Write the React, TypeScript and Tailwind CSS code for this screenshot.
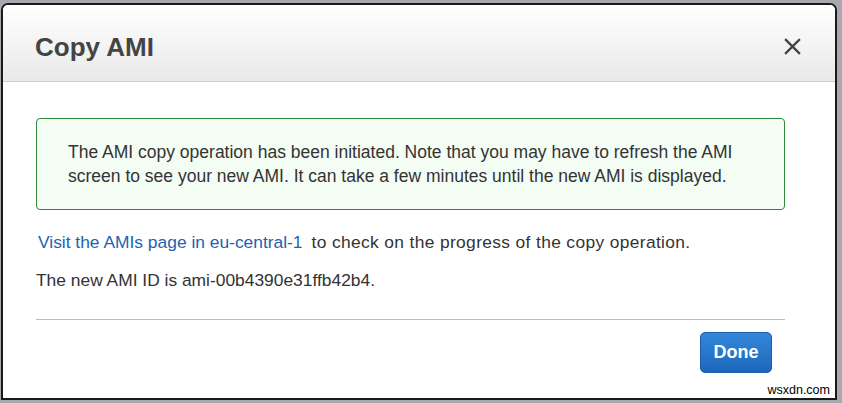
import React from 'react';

const CloseIcon = () => (
  <svg width="17" height="17" viewBox="0 0 18 18" className="text-[#444]">
    <path d="M2 2 L16 16 M16 2 L2 16" stroke="currentColor" strokeWidth="2.4" strokeLinecap="square" />
  </svg>
);

const App = () => {
  return (
    <div className="w-[842px] h-[403px] bg-[#a6aaae] pt-[3px] pl-px overflow-hidden font-['Liberation_Sans',Arial,sans-serif]">
      <div className="w-[836px] h-[397px] bg-white border-2 border-[#1a1a1a] rounded-t-[7px] flex flex-col overflow-hidden relative">
        <div className="h-[77px] shrink-0 bg-gradient-to-b from-white to-[#e9e9e9] border-b border-[#cfcfcf] flex items-center justify-between pl-[32px] pr-[34px]">
          <h1 className="text-[26px] font-bold text-[#444] pt-[8px]">Copy AMI</h1>
          <button className="pt-[6px]">
            <CloseIcon />
          </button>
        </div>

        <div className="pl-[33px] pr-[50px] pt-[36px]">
          <div className="h-[92px] border border-[#2f8a3e] bg-[#f3fdf4] rounded-[4px] pl-[31px] pr-2 flex items-center">
            <p className="text-[17.5px] leading-[24px] text-[#333] whitespace-nowrap">
              The AMI copy operation has been initiated. Note that you may have to refresh the AMI
              <br />
              screen to see your new AMI. It can take a few minutes until the new AMI is displayed.
            </p>
          </div>

          <p className="mt-[20px] text-[17.4px] leading-[24px] text-[#333] whitespace-nowrap">
            <a href="#" className="text-[#1e63b0] pl-[2px]">Visit the AMIs page in eu-central-1</a>
            <span className="pl-[9px] tracking-[0.35px]">to check on the progress of the copy operation.</span>
          </p>
          <p className="mt-[14px] text-[17.4px] leading-[24px] text-[#333]">The new AMI ID is ami-00b4390e31ffb42b4.</p>

          <div className="mt-[27px] border-t border-[#bdbdbd]" />

          <div className="flex justify-end pt-[12px] pr-[13px]">
            <button className="w-[72px] h-[41px] rounded-[5px] border border-[#1f5da8] bg-gradient-to-b from-[#3388db] to-[#1c66bb] text-white font-bold text-[18px]">
              Done
            </button>
          </div>
        </div>

        <span className="absolute right-[5px] bottom-0 text-[12.5px] leading-[16px] text-black">
          wsxdn.com
        </span>
      </div>
    </div>
  );
};

export default App;
